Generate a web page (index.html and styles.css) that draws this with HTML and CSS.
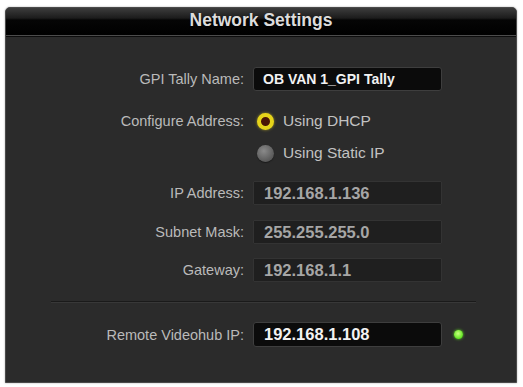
FILE: index.html
```html
<!DOCTYPE html>
<html lang="en">
<head>
  <meta charset="UTF-8">
  <title>Network Settings</title>
  <link rel="stylesheet" href="styles.css">
</head>
<body>
  <div class="panel">
    <div class="panel-header">Network Settings</div>
    <div class="panel-body">
      <!-- GPI name -->
      <div class="row row-gpi">
        <label class="label">GPI Tally Name:</label>
        <div class="field field-active field-name">OB VAN 1_GPI Tally</div>
      </div>

      <!-- Address mode -->
      <div class="row row-dhcp">
        <label class="label">Configure Address:</label>
        <div class="radio-item">
          <span class="radio radio-on"></span>
          <span class="radio-text">Using DHCP</span>
        </div>
      </div>
      <div class="row row-static">
        <span class="label"></span>
        <div class="radio-item">
          <span class="radio radio-off"></span>
          <span class="radio-text">Using Static IP</span>
        </div>
      </div>

      <!-- Static values (disabled) -->
      <div class="row row-ip">
        <label class="label">IP Address:</label>
        <div class="field field-disabled">192.168.1.136</div>
      </div>
      <div class="row row-mask">
        <label class="label">Subnet Mask:</label>
        <div class="field field-disabled">255.255.255.0</div>
      </div>
      <div class="row row-gw">
        <label class="label">Gateway:</label>
        <div class="field field-disabled">192.168.1.1</div>
      </div>

      <div class="divider"></div>

      <!-- Videohub -->
      <div class="row row-remote">
        <label class="label">Remote Videohub IP:</label>
        <div class="field field-active">192.168.1.108</div>
        <span class="led"></span>
      </div>
    </div>
  </div>
</body>
</html>
```

FILE: styles.css
```css
body {
  margin: 0;
  padding: 7px 6px 4px 5px;
  background: #ffffff;
  font-family: "Liberation Sans", Arial, sans-serif;
}
.panel {
  width: 510px;
  height: 374px;
  background: #2b2b2b;
  border: 1px solid #4a4a4a;
  border-radius: 5px 5px 0 0;
  box-shadow: 0 0 2px rgba(0, 0, 0, 0.35);
  overflow: hidden;
}
.panel-header {
  height: 27px;
  line-height: 25px;
  text-align: center;
  font-size: 17.5px;
  font-weight: bold;
  color: #dcdcdc;
  background: linear-gradient(#3c3c3c 0, #1c1c1c 10px, #050505 12px, #000 100%);
  border-bottom: 1px solid #4c4c4c;
  box-shadow: 0 1px 0 #0c0c0c;
  text-shadow: 0 1px 1px #000;
}
.panel-body {
  display: flex;
  flex-direction: column;
  padding-top: 31px;
}
.row {
  display: grid;
  grid-template-columns: 238px 189px auto;
  column-gap: 9px;
  align-items: center;
  height: 24px;
}
.row-dhcp { margin-top: 18px; }
.row-static { margin-top: 8px; }
.row-ip { margin-top: 16px; }
.row-mask { margin-top: 15px; }
.row-gw { margin-top: 14px; }
.row-remote { margin-top: 19px; height: 25px; }

.label {
  text-align: right;
  font-size: 14.5px;
  color: #bababa;
}
.field {
  box-sizing: border-box;
  height: 100%;
  padding-left: 10px;
  display: flex;
  align-items: center;
  font-weight: bold;
  font-size: 16.5px;
  border-radius: 3px;
}
.field-active {
  background: #0b0b0b;
  border: 1px solid #3e3e3e;
  color: #f2f2f2;
}
.field-name {
  font-size: 14px;
  padding-left: 9px;
}
.field-disabled {
  background: #1f1f1f;
  border: 1px solid #333;
  color: #a6a6a6;
  font-weight: bold;
  border-radius: 1px;
}

.radio-item {
  display: flex;
  align-items: center;
  gap: 9px;
  margin-left: 4px;
}
.radio {
  box-sizing: border-box;
  width: 17px;
  height: 17px;
  border-radius: 50%;
}
.radio-on {
  background: #4a1606;
  border: 4px solid #e6d41a;
  box-shadow: 0 0 3px rgba(240, 220, 40, 0.6);
}
.radio-off {
  background: radial-gradient(circle at 40% 35%, #8a8a8a, #5a5a5a 70%);
  box-shadow: 0 1px 1px #1a1a1a;
}
.radio-text {
  font-size: 15.5px;
  color: #c2c2c2;
}

.divider {
  margin: 19px 40px 0 45px;
  height: 0;
  border-top: 1px solid #1a1a1a;
  border-bottom: 1px solid #383838;
}

.led {
  width: 9px;
  height: 9px;
  margin-left: 3px;
  border-radius: 50%;
  background: radial-gradient(circle at 45% 40%, #c8ff80, #5ee51e 70%);
  box-shadow: 0 0 3px #5fe020;
}
```
